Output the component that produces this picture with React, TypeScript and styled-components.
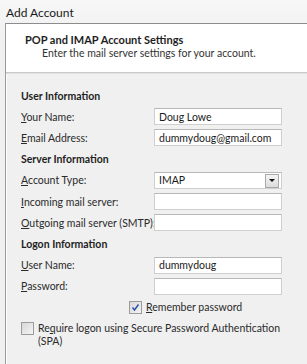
import styled, { createGlobalStyle } from 'styled-components';

const GlobalStyle = createGlobalStyle`
  html, body {
    margin: 0;
    padding: 0;
    background: #f0f0f0;
  }
  body {
    font-family: Lato, "Open Sans", "DejaVu Sans", sans-serif;
    font-size: 10.5px;
    color: #1e1e1e;
  }
`;

const Window = styled.div`
  width: 307px;
  height: 364px;
  overflow: hidden;
  display: flex;
  flex-direction: column;
  background: linear-gradient(#f7f7f7, #f0f0f0 40px);
`;

const TitleBar = styled.div`
  height: 23px;
  padding: 1px 0 0 6px;
  box-sizing: border-box;
  display: flex;
  align-items: center;
  font-size: 12px;
  color: #1a1a1a;
`;

const Frame = styled.div`
  flex: 1;
  margin-left: 5px;
  border-left: 1px solid #9a9a9a;
  border-top: 1px solid #8c8c8c;
  display: flex;
  flex-direction: column;
  box-shadow: inset 1px 1px 0 #ffffff;
`;

const Header = styled.div`
  height: 49px;
  background: #ffffff;
  border-bottom: 1px solid #c9c9c9;
  box-shadow: 0 1px 0 #e2e2e2;
  padding: 9px 0 0 19px;
  box-sizing: border-box;
`;

const HeaderTitle = styled.div`
  font-weight: 700;
  font-size: 11px;
  line-height: 14px;
`;

const HeaderSub = styled.div`
  padding-left: 17px;
  line-height: 13px;
  color: #333;
`;

const Body = styled.div`
  padding: 12px 24px 0 15px;
  display: grid;
  grid-template-columns: 133px 128px;
  grid-auto-rows: 21.2px;
  align-items: center;
`;

const Section = styled.div`
  grid-column: 1 / -1;
  font-weight: 700;
`;

const Label = styled.div`
  color: #2a2a2a;
  white-space: nowrap;
`;

const Key = styled.span`
  text-decoration: underline;
  text-underline-offset: 1px;
`;

const Field = styled.div`
  height: 17px;
  box-sizing: border-box;
  border: 1px solid #cfcfcf;
  border-top-color: #b8b8b8;
  background: #fff;
  padding-left: 4px;
  display: flex;
  align-items: center;
  color: #1a1a1a;
  position: relative;
`;

const DropButton = styled.div`
  position: absolute;
  right: 2px;
  top: 1px;
  width: 12px;
  height: 12px;
  border: 1px solid #a9a9a9;
  background: linear-gradient(#f4f4f4, #dcdcdc);
  display: flex;
  align-items: center;
  justify-content: center;
`;

const Arrow = styled.div`
  width: 0;
  height: 0;
  border-left: 3px solid transparent;
  border-right: 3px solid transparent;
  border-top: 3px solid #111;
`;

const CheckRow = styled.div<{ $indent: number; $span?: number }>`
  grid-column: 1 / -1;
  grid-row: span ${({ $span }) => $span ?? 1};
  align-self: ${({ $span }) => ($span ? 'start' : 'center')};
  padding-top: ${({ $span }) => ($span ? 4 : 0)}px;
  display: flex;
  align-items: flex-start;
  gap: 4px;
  padding-left: ${({ $indent }) => $indent}px;
  line-height: 13px;
`;

const Box = styled.div`
  flex: none;
  width: 11px;
  height: 11px;
  border: 1px solid #9c9c9c;
  background: linear-gradient(135deg, #d8d8d8, #f4f4f4);
  display: flex;
  align-items: center;
  justify-content: center;
`;

const CheckText = styled.span`
  color: #2a2a2a;
`;

function Check({ on }: { on: boolean }) {
  return (
    <Box>
      {on && (
        <svg width="9" height="9" viewBox="0 0 9 9">
          <path d="M1.5 4.5 L3.5 7 L7.5 1.5" fill="none" stroke="#2a4fa8" strokeWidth="1.4" />
        </svg>
      )}
    </Box>
  );
}

export default function App() {
  return (
    <Window>
      <GlobalStyle />
      <TitleBar>Add Account</TitleBar>
      <Frame>
        <Header>
          <HeaderTitle>POP and IMAP Account Settings</HeaderTitle>
          <HeaderSub>Enter the mail server settings for your account.</HeaderSub>
        </Header>
        <Body>
          <Section>User Information</Section>
          <Label><Key>Y</Key>our Name:</Label>
          <Field>Doug Lowe</Field>
          <Label><Key>E</Key>mail Address:</Label>
          <Field>dummydoug@gmail.com</Field>
          <Section>Server Information</Section>
          <Label><Key>A</Key>ccount Type:</Label>
          <Field>
            IMAP
            <DropButton><Arrow /></DropButton>
          </Field>
          <Label><Key>I</Key>ncoming mail server:</Label>
          <Field />
          <Label><Key>O</Key>utgoing mail server (SMTP):</Label>
          <Field />
          <Section>Logon Information</Section>
          <Label><Key>U</Key>ser Name:</Label>
          <Field>dummydoug</Field>
          <Label><Key>P</Key>assword:</Label>
          <Field />
          <CheckRow $indent={108}>
            <Check on />
            <CheckText><Key>R</Key>emember password</CheckText>
          </CheckRow>
          <CheckRow $indent={0} $span={2}>
            <Check on={false} />
            <CheckText>
              Re<Key>q</Key>uire logon using Secure Password Authentication
              <br />
              (SPA)
            </CheckText>
          </CheckRow>
        </Body>
      </Frame>
    </Window>
  );
}
